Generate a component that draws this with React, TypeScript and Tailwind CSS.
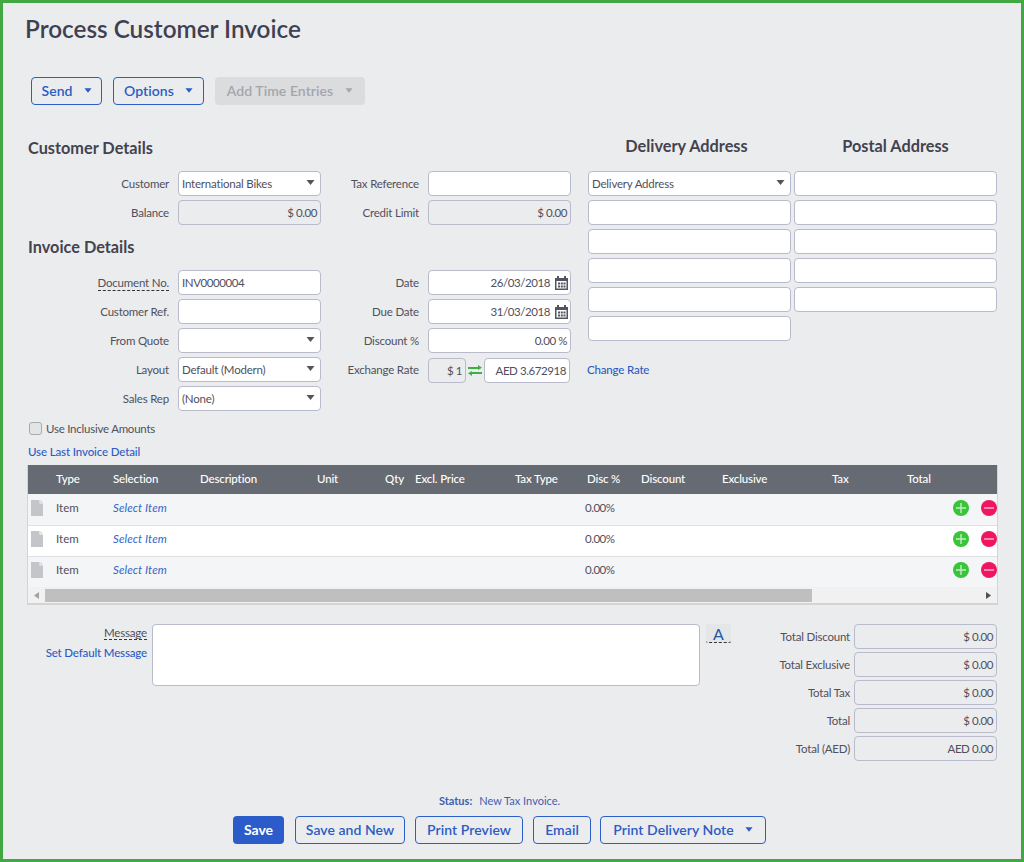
import React from "react";

const Tri = ({ className = "" }: { className?: string }) => (
  <svg width="9" height="5" viewBox="0 0 9 5" className={className}>
    <path d="M0.5 0h8L4.5 5z" fill="currentColor" />
  </svg>
);

const Btn = ({ w, label, caret }: { w: string; label: string; caret?: boolean }) => (
  <button className={`${w} h-[28px] shrink-0 flex items-center justify-center gap-[8px] rounded-[4px] border border-[#2b5fc7] text-[14px] font-semibold tracking-[0.06px] text-[#2b5cc4] leading-none`}>
    <span>{label}</span>
    {caret && <Tri className="text-[#2b5cc4] mb-[2px] ml-[3px] w-[8px]" />}
  </button>
);

const Label = ({ w, children, dashed }: { w: string; children: React.ReactNode; dashed?: boolean }) => (
  <div className={`${w} shrink-0 mr-[9px] text-right text-[11.500px] tracking-[-0.2px] text-[#50505c] leading-[25px]`}>
    <span className={dashed ? "border-b border-dashed border-[#333] pb-[1px]" : ""}>{children}</span>
  </div>
);

const Box = ({ children, caret, right, grey, w = "w-[143px]", icon, num }: { children?: React.ReactNode; caret?: boolean; right?: boolean; grey?: boolean; w?: string; icon?: boolean; num?: boolean }) => (
  <div className={`${w} h-[25px] shrink-0 flex items-center rounded-[4px] border border-[#b9bacb] text-[11.500px] text-[#50505c] ${num || right ? "tracking-[-0.42px]" : "tracking-[-0.2px]"} ${grey ? "bg-[#ebecee]" : "bg-white"} ${right ? "justify-end pr-[3px]" : "justify-between pl-[3px] pr-[5px]"}`}>
    <span className="whitespace-nowrap">{children}</span>
    {caret && <Tri className="text-[#555] mb-[3px]" />}
    {icon && <Cal />}
  </div>
);

const Cal = () => (
  <svg width="13" height="14" viewBox="0 0 13 14" className="ml-[5px] mr-[-1px] shrink-0">
    <path d="M0 2h2V0h2v2h5V0h2v2h2v12H0z" fill="#505560" />
    <path d="M1.500 5h10v7.500h-10z" fill="#fff" />
    <path d="M3 6.500h2v2H3zM5.800 6.500h2v2h-2zM8.500 6.500h2v2h-2zM3 9.500h2v2H3zM5.800 9.500h2v2h-2zM8.500 9.500h2v2h-2z" fill="#505560" />
  </svg>
);

const Swap = () => (
  <svg width="14" height="11" viewBox="0 0 14 11" className="mx-[2px] mb-[1px] shrink-0">
    <path d="M0 2h10V0l4 2.800-4 2.200V4H0zM14 7H4V6L0 8.200 4 11V9h10z" fill="#3fae49" />
  </svg>
);

const Row = ({ children }: { children: React.ReactNode }) => <div className="flex h-[25px]">{children}</div>;

const Heading = ({ children }: { children: React.ReactNode }) => (
  <h2 className="h-[24px] text-[16.300px] font-bold leading-[24px] text-[#43434f]">{children}</h2>
);

const cols = "grid grid-cols-[28px_57px_87px_117px_47px_51px_100px_72px_54px_81px_110px_75px_46px_28px_16px]";

const FileIcon = () => (
  <svg width="12" height="16" viewBox="0 0 12 16" className="ml-[3px]">
    <path d="M0 0h8.500v3.500H12V16H0zM9.500 0.300L11.700 2.500H9.500z" fill="#c4c5c8" />
  </svg>
);

const Circle = ({ color, plus }: { color: string; plus?: boolean }) => (
  <svg width="16" height="16" viewBox="0 0 16 16">
    <circle cx="8" cy="8" r="8" fill={color} />
    <path d={plus ? "M3 7.300h4.300V3h1.400v4.300H13v1.400H8.700V13H7.300V8.700H3z" : "M3 7.300h10v1.400H3z"} fill="#ffffff" fillOpacity="0.7" />
  </svg>
);

const TableRow = ({ bg, first }: { bg: string; first?: boolean }) => (
  <div className={`${cols} h-[31px] items-center text-[11.500px] text-[#50505c] ${first ? "pb-[3px]" : "pb-[4px] border-t border-[#dfe0e3]"} ${bg}`}>
    <div className="flex"><FileIcon /></div>
    <div>Item</div>
    <div className="italic tracking-[0.1px] text-[#3565c9]">Select Item</div>
    <div /><div /><div /><div /><div />
    <div className="ml-[-2px] tracking-[-0.5px]">0.00%</div>
    <div /><div /><div /><div />
    <div className="flex"><Circle color="#39c43a" plus /></div>
    <div className="overflow-hidden w-[16px] flex"><Circle color="#ef1560" /></div>
  </div>
);

const Total = ({ label, value }: { label: string; value: string }) => (
  <div className="flex h-[25px] justify-end">
    <div className="mr-[4px] text-right text-[11.500px] tracking-[-0.2px] text-[#50505c] leading-[25px]">{label}</div>
    <Box grey right>{value}</Box>
  </div>
);

export default function App() {
  const headers = ["", "Type", "Selection", "Description", "Unit", "Qty", "Excl. Price", "Tax Type", "Disc %", "Discount", "Exclusive", "Tax", "Total"];
  return (
    <div className="w-[1024px] h-[862px] overflow-hidden border-[3px] border-[#43a843] bg-[#ebecee] font-['Lato',sans-serif]">
      <h1 className="ml-[22px] pt-[10px] text-[24.300px] font-semibold leading-[32px] text-[#3f4150]">Process Customer Invoice</h1>

      <div className="ml-[28px] mt-[32px] flex">
        <Btn w="w-[71px]" label="Send" caret />
        <div className="w-[11px]" />
        <Btn w="w-[91px]" label="Options" caret />
        <div className="w-[11px]" />
        <button className="w-[150px] h-[28px] flex items-center justify-center gap-[10px] rounded-[4px] bg-[#dbdcde] text-[14px] font-semibold tracking-[0.06px] text-[#a4a6ac] leading-none">
          <span>Add Time Entries</span>
          <Tri className="mb-[2px] ml-[2px] w-[8px]" />
        </button>
      </div>

      <div className="ml-[25px] flex">
        <div className="w-[543px] shrink-0">
          <div className="mt-[31px] mb-[11px]"><Heading>Customer Details</Heading></div>
          <div className="flex flex-col gap-[4px]">
            <Row>
              <Label w="w-[141px]">Customer</Label>
              <Box caret>International Bikes</Box>
              <Label w="w-[98px]">Tax Reference</Label>
              <Box />
            </Row>
            <Row>
              <Label w="w-[141px]">Balance</Label>
              <Box grey right>$ 0.00</Box>
              <Label w="w-[98px]">Credit Limit</Label>
              <Box grey right>$ 0.00</Box>
            </Row>
          </div>
          <div className="mt-[10px] mb-[11px]"><Heading>Invoice Details</Heading></div>
          <div className="flex flex-col gap-[4px]">
            <Row>
              <Label w="w-[141px]" dashed>Document No.</Label>
              <Box num>INV0000004</Box>
              <Label w="w-[98px]">Date</Label>
              <Box right icon>26/03/2018</Box>
            </Row>
            <Row>
              <Label w="w-[141px]">Customer Ref.</Label>
              <Box />
              <Label w="w-[98px]">Due Date</Label>
              <Box right icon>31/03/2018</Box>
            </Row>
            <Row>
              <Label w="w-[141px]">From Quote</Label>
              <Box caret />
              <Label w="w-[98px]">Discount %</Label>
              <Box right>0.00 %</Box>
            </Row>
            <Row>
              <Label w="w-[141px]">Layout</Label>
              <Box caret>Default (Modern)</Box>
              <Label w="w-[98px]">Exchange Rate</Label>
              <div className="flex items-center mt-[1px] h-[25px]">
                <Box grey right w="w-[38px]">$ 1</Box>
                <Swap />
                <Box right w="w-[86px]">AED 3.672918</Box>
              </div>
            </Row>
            <Row>
              <Label w="w-[141px]">Sales Rep</Label>
              <Box caret>(None)</Box>
            </Row>
          </div>
          <div className="mt-[8px] flex h-[20px] items-center">
            <div className="ml-px h-[13px] w-[13px] mb-[2px] rounded-[3px] border border-[#a9aab0] bg-[#e3e4e6]" />
            <span className="ml-[4px] text-[11.500px] tracking-[-0.24px] text-[#50505c]">Use Inclusive Amounts</span>
          </div>
          <div className="mt-[3px] h-[20px] text-[11.500px] tracking-[-0.13px] leading-[20px] font-medium text-[#2b5cc4]">Use Last Invoice Detail</div>
        </div>

        <div className="ml-[17px] w-[203px] shrink-0">
          <div className="mt-[29px] mb-[13px] pr-[6px] text-center"><Heading>Delivery Address</Heading></div>
          <div className="flex flex-col gap-[4px]">
            <Box caret w="w-[203px]">Delivery Address</Box>
            <Box w="w-[203px]" />
            <Box w="w-[203px]" />
            <Box w="w-[203px]" />
            <Box w="w-[203px]" />
            <Box w="w-[203px]" />
          </div>
          <div className="mt-[19px] ml-[-1px] h-[20px] text-[11.500px] tracking-[-0.18px] leading-[20px] font-medium text-[#2b5cc4]">Change Rate</div>
        </div>

        <div className="ml-[3px] w-[203px] shrink-0">
          <div className="mt-[29px] mb-[13px] text-center"><Heading>Postal Address</Heading></div>
          <div className="flex flex-col gap-[4px]">
            <Box w="w-[203px]" />
            <Box w="w-[203px]" />
            <Box w="w-[203px]" />
            <Box w="w-[203px]" />
            <Box w="w-[203px]" />
          </div>
        </div>
      </div>

      <div className="ml-[24px] mt-[3px] w-[971px] h-[140px] overflow-hidden border-b-2 border-r border-[#d3d4d6] border-l border-l-[#d3d4d6]">
        <div className={`${cols} h-[29px] pb-[2px] items-center bg-[#666a72] text-[11.500px] tracking-[-0.15px] font-medium text-white`}>
          {headers.map((h, i) => (
            <div key={i} className={h === "Qty" ? "text-right pr-[11px]" : ""}>{h}</div>
          ))}
        </div>
        <TableRow bg="bg-[#f4f5f7]" first />
        <TableRow bg="bg-white" />
        <TableRow bg="bg-[#f4f5f7]" />
        <div className="h-[16px] flex items-center bg-[#f1f1f1]">
          <div className="w-[17px] flex justify-center">
            <svg width="5" height="7" viewBox="0 0 5 7"><path d="M5 0v7L0 3.500z" fill="#a3a3a3" /></svg>
          </div>
          <div className="w-[767px] h-[13px] bg-[#bfbfbf]" />
          <div className="flex-1 flex justify-end pr-[6px]">
            <svg width="5" height="7" viewBox="0 0 5 7"><path d="M0 0v7l5-3.500z" fill="#505050" /></svg>
          </div>
        </div>
      </div>

      <div className="ml-[25px] mt-[19px] flex">
        <div className="w-[119px] shrink-0 text-right text-[11.500px] tracking-[-0.16px]">
          <div className="h-[19px] leading-[18px] text-[#50505c]"><span className="border-b border-dashed border-[#333]">Message</span></div>
          <div className="h-[19px] leading-[19px] font-medium text-[#2b5cc4]">Set Default Message</div>
        </div>
        <div className="ml-[5px] h-[62px] w-[548px] shrink-0 rounded-[4px] border border-[#b9bacb] bg-white" />
        <div className="ml-[6px] h-[19px] w-[25px] shrink-0 rounded-[2px] border-b border-dashed border-[#333] bg-[#e5e6e8] text-center text-[16px] leading-[19px] text-[#1f5aa8]">A</div>
        <div className="ml-auto mr-[24px] flex flex-col gap-[3px]">
          <Total label="Total Discount" value="$ 0.00" />
          <Total label="Total Exclusive" value="$ 0.00" />
          <Total label="Total Tax" value="$ 0.00" />
          <Total label="Total" value="$ 0.00" />
          <Total label="Total (AED)" value="AED 0.00" />
        </div>
      </div>

      <div className="pr-[25px] mt-[31px] text-center text-[11px] leading-[18px] text-[#3f5fae]">
        <span className="font-bold">Status:</span>
        <span className="ml-[7px]">New Tax Invoice.</span>
      </div>
      <div className="ml-[230px] mt-[6px] flex">
        <button className="w-[51px] h-[28px] rounded-[4px] bg-[#2b5cc9] text-[14px] font-bold text-white leading-none">Save</button>
        <div className="w-[11px]" />
        <Btn w="w-[110px]" label="Save and New" />
        <div className="w-[10px]" />
        <Btn w="w-[108px]" label="Print Preview" />
        <div className="w-[10px]" />
        <Btn w="w-[58px]" label="Email" />
        <div className="w-[9px]" />
        <Btn w="w-[166px]" label="Print Delivery Note" caret />
      </div>
    </div>
  );
}
